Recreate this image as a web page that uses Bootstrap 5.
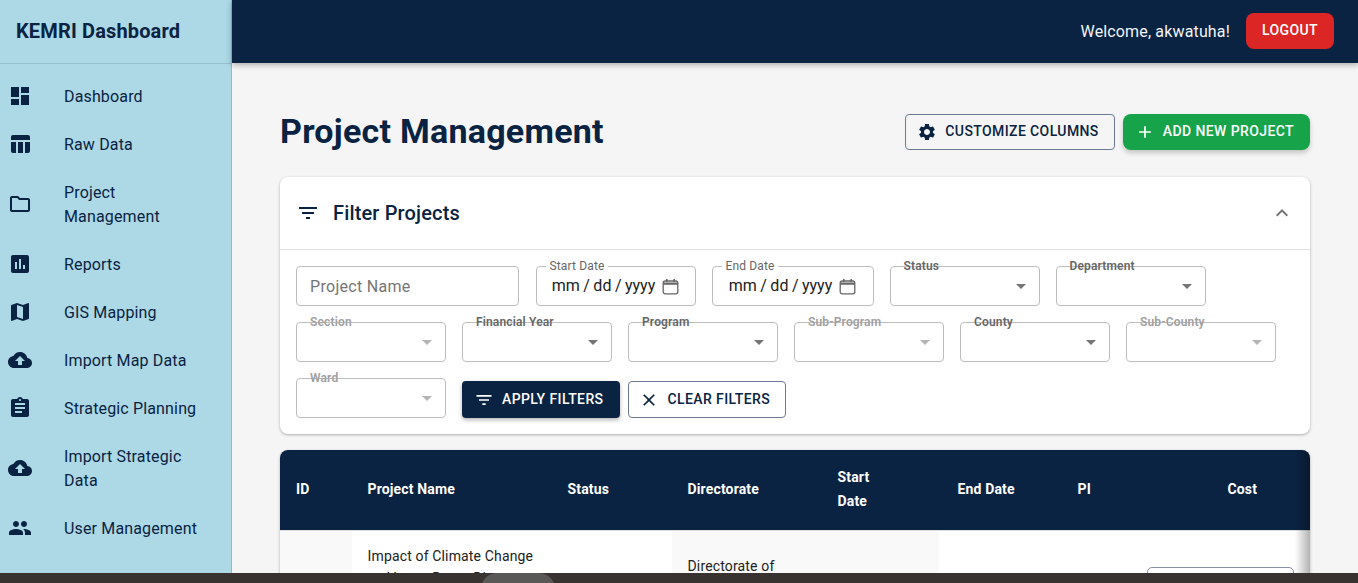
<!DOCTYPE html>
<html lang="en">
<head>
  <meta charset="UTF-8">
  <meta name="viewport" content="width=device-width, initial-scale=1.0">
  <title>KEMRI Dashboard</title>
  <link href="https://cdn.jsdelivr.net/npm/bootstrap@5.3.3/dist/css/bootstrap.min.css" rel="stylesheet">
  <script src="https://cdn.jsdelivr.net/npm/bootstrap@5.3.3/dist/js/bootstrap.bundle.min.js"></script>
  <style>
    html, body { height: 100%; overflow: hidden; }
    body { font-family: Roboto, "Liberation Sans", sans-serif; letter-spacing: .15px; background: #f5f5f5; color: #0a2342; }
    svg.ico { width: 24px; height: 24px; fill: currentColor; flex-shrink: 0; }
    svg.ico-btn { width: 20px; height: 20px; fill: currentColor; margin: 2px 8px 0 -4px; flex-shrink: 0; }

    .side-bar { width: 232px; flex-shrink: 0; background: #add8e6; border-right: 1px solid #8fbccb; height: 100vh; }
    .side-title { height: 64px; padding-left: 16px; font-size: 20px; font-weight: 700; line-height: 63px; border-bottom: 1px solid #93bfce; }
    .side-link { display: flex; align-items: center; min-height: 48px; padding: 11px 24px 11px 8px; font-size: 16px; line-height: 24px; color: #0a2342; text-decoration: none; }
    .side-link span { margin-left: 32px; padding-top: 2px; }

    .top-bar { height: 63px; background: #0a2342; padding: 0 24px 1px 0; box-shadow: 0 2px 6px rgba(0,0,0,.3); color: #f2f4f7; position: relative; z-index: 2; }
    .top-bar .hello { padding-top: 2px; }
    .mui-btn { height: 36px; padding: 0 16px 2px; font-size: 14px; font-weight: 500; letter-spacing: .4px; line-height: 1; border-radius: 4px; white-space: nowrap; display: inline-flex; align-items: center; }
    .btn-logout { background: #dc2626; color: #fff; border: 0; border-radius: 8px; }
    .btn-logout:hover { background: #dc2626; color: #fff; }
    .btn-add { background: #16a34a; color: #fff; border: 0; border-radius: 8px; box-shadow: 0 3px 5px rgba(0,0,0,.2); }
    .btn-add:hover { background: #16a34a; color: #fff; }
    .btn-line { background: transparent; color: #0a2342; border: 1px solid #6b7a90; padding: 0 15px 2px; }
    .btn-navy { background: #0a2342; color: #fff; border: 0; height: 37px; padding-right: 17px; box-shadow: 0 2px 4px rgba(0,0,0,.3); }
    .btn-navy:hover { background: #0a2342; color: #fff; }
    .btn-tall { height: 37px; padding-left: 14px; }

    .main-pane { padding: 48px; min-width: 0; }
    .page-title { font-size: 34px; font-weight: 700; letter-spacing: .25px; line-height: 40px; padding-bottom: 2px; margin: 0; color: #0a2342; }

    .filter-card { background: #fff; border-radius: 8px; box-shadow: 0 1px 3px rgba(0,0,0,.3); margin-top: 24px; }
    .filter-head { height: 73px; padding: 0 16px; border-bottom: 1px solid #e0e0e0; }
    .filter-head h2 { font-size: 20px; font-weight: 500; margin: 0 0 0 13px; color: #0a2342; }
    .chevron { color: #757575; }
    .filter-body { padding: 16px; }

    .fld { position: relative; width: 150px; }
    .fld-name { width: 223px; margin-right: .5px; }
    .fld-start { width: 160px; }
    .fld-end { width: 162px; }
    .fld label { position: absolute; left: 14px; top: -8px; font-size: 12px; line-height: 16px; font-weight: 600; color: #666; }
    .fld.off label { color: #a0a0a0; }
    .fld.dated label { left: 10px; padding: 0 3px 0 4px; font-weight: 400; background: #fff; }
    .fld .form-control, .fld .form-select { height: 40px; font-size: 16px; padding: 0 13px; border: 1px solid #bdbdbd; border-radius: 4px; color: #212121; box-shadow: none; }
    .fld .form-control::placeholder { color: #757575; letter-spacing: .3px; }
    .fld .date-box { padding: 0; gap: 7px; letter-spacing: 0; word-spacing: -.5px; }
    .date-box svg { width: 17px; height: 17px; }
    .fld .form-select { background-color: #fff; background-size: 24px 24px; background-position: right 6px center;
      background-image: url("data:image/svg+xml,%3csvg xmlns='http://www.w3.org/2000/svg' viewBox='0 0 24 24'%3e%3cpath fill='%23757575' d='M7 10l5 5 5-5z'/%3e%3c/svg%3e"); }
    .fld .form-select:disabled { background-color: #fff;
      background-image: url("data:image/svg+xml,%3csvg xmlns='http://www.w3.org/2000/svg' viewBox='0 0 24 24'%3e%3cpath fill='%23b5b5b5' d='M7 10l5 5 5-5z'/%3e%3c/svg%3e"); }

    .table-box { position: relative; margin-top: 16px; border-radius: 8px 8px 0 0; overflow: hidden; box-shadow: 0 1px 3px rgba(0,0,0,.3); background: #fff; }
    .table-box::after { content: ""; position: absolute; top: 0; right: 0; bottom: 0; width: 15px; background: linear-gradient(to right, rgba(0,0,0,0), rgba(0,0,0,.3)); }
    .proj-table { table-layout: fixed; width: 1082px; margin: 0; }
    .proj-table th { background: #0a2342; color: #fff; height: 80px; padding: 0 16px 2px 15.5px; font-size: 14px; font-weight: 700; line-height: 24px; vertical-align: middle; border-bottom: 1px solid #e0e0e0; }
    .proj-table th:first-child { padding-left: 16px; }
    .proj-table td { font-size: 14px; line-height: 24px; padding: 13px 16px 14px 15.5px; vertical-align: top; color: #212121; background: #fff; border: 0; box-shadow: none; }
    .proj-table td.band { background: #f9f9f9; }
    .proj-table td.band-end { box-shadow: inset -3px 0 #fff; }
    .proj-table td.low { padding-top: 23px; }
    .proj-table td.tight { line-height: 22px; padding-top: 14px; }
    .act-box { width: 147px; height: 40px; margin: 23px 0 0 -80.5px; border: 1px solid #8a91a6; border-radius: 5px; }

    .os-strip { position: fixed; left: 0; right: 0; bottom: 0; height: 10px; background: #383331; z-index: 10; }
    .os-pill { position: absolute; left: 481px; top: 0; width: 74px; height: 16px; background: #5a5856; border-radius: 16px 16px 0 0; }
  </style>
</head>
<body>
  <div class="d-flex">
    <!-- Sidebar -->
    <aside class="side-bar">
      <div class="side-title">KEMRI Dashboard</div>
      <nav class="py-2">
        <a class="side-link" href="#"><svg class="ico" viewBox="0 0 24 24"><path d="M3 13h8V3H3v10zm0 8h8v-6H3v6zm10 0h8V11h-8v10zm0-18v6h8V3h-8z"/></svg><span>Dashboard</span></a>
        <a class="side-link" href="#"><svg class="ico" viewBox="0 0 24 24"><path d="M10 10.02h5V21h-5zM17 21h3c1.1 0 2-.9 2-2v-9h-5v11zm3-18H5c-1.1 0-2 .9-2 2v3h19V5c0-1.1-.9-2-2-2zM3 19c0 1.1.9 2 2 2h3V10H3v9z"/></svg><span>Raw Data</span></a>
        <a class="side-link" href="#"><svg class="ico" viewBox="0 0 24 24"><path d="M9.17 6l2 2H20v10H4V6h5.17M10 4H4c-1.1 0-1.99.9-1.99 2L2 18c0 1.1.9 2 2 2h16c1.1 0 2-.9 2-2V8c0-1.1-.9-2-2-2h-8l-2-2z"/></svg><span>Project Management</span></a>
        <a class="side-link" href="#"><svg class="ico" viewBox="0 0 24 24"><path d="M19 3H5c-1.1 0-2 .9-2 2v14c0 1.1.9 2 2 2h14c1.1 0 2-.9 2-2V5c0-1.1-.9-2-2-2zM9 17H7v-7h2v7zm4 0h-2V7h2v10zm4 0h-2v-4h2v4z"/></svg><span>Reports</span></a>
        <a class="side-link" href="#"><svg class="ico" viewBox="0 0 24 24"><path d="M20.5 3l-.16.03L15 5.1 9 3 3.36 4.9c-.21.07-.36.25-.36.48V20.5c0 .28.22.5.5.5l.16-.03L9 18.9l6 2.1 5.64-1.9c.21-.07.36-.25.36-.48V3.5c0-.28-.22-.5-.5-.5zM15 19l-6-2.11V5l6 2.11V19z"/></svg><span>GIS Mapping</span></a>
        <a class="side-link" href="#"><svg class="ico" viewBox="0 0 24 24"><path d="M19.35 10.04C18.67 6.59 15.64 4 12 4 9.11 4 6.6 5.64 5.35 8.04 2.34 8.36 0 10.91 0 14c0 3.31 2.69 6 6 6h13c2.76 0 5-2.24 5-5 0-2.64-2.05-4.78-4.65-4.96zM14 13v4h-4v-4H7l5-5 5 5h-3z"/></svg><span>Import Map Data</span></a>
        <a class="side-link" href="#"><svg class="ico" viewBox="0 0 24 24"><path d="M19 3h-4.18C14.4 1.84 13.3 1 12 1c-1.3 0-2.4.84-2.82 2H5c-1.1 0-2 .9-2 2v14c0 1.1.9 2 2 2h14c1.1 0 2-.9 2-2V5c0-1.1-.9-2-2-2zm-7 0c.55 0 1 .45 1 1s-.45 1-1 1-1-.45-1-1 .45-1 1-1zm2 14H7v-2h7v2zm3-4H7v-2h10v2zm0-4H7V7h10v2z"/></svg><span>Strategic Planning</span></a>
        <a class="side-link" href="#"><svg class="ico" viewBox="0 0 24 24"><path d="M19.35 10.04C18.67 6.59 15.64 4 12 4 9.11 4 6.6 5.64 5.35 8.04 2.34 8.36 0 10.91 0 14c0 3.31 2.69 6 6 6h13c2.76 0 5-2.24 5-5 0-2.64-2.05-4.78-4.65-4.96zM14 13v4h-4v-4H7l5-5 5 5h-3z"/></svg><span>Import Strategic Data</span></a>
        <a class="side-link" href="#"><svg class="ico" viewBox="0 0 24 24"><path d="M16 11c1.66 0 2.99-1.34 2.99-3S17.66 5 16 5c-1.66 0-3 1.34-3 3s1.34 3 3 3zm-8 0c1.66 0 2.99-1.34 2.99-3S9.66 5 8 5C6.34 5 5 6.34 5 8s1.34 3 3 3zm0 2c-2.33 0-7 1.17-7 3.5V19h14v-2.5c0-2.33-4.67-3.5-7-3.5zm8 0c-.29 0-.62.02-.97.05 1.16.84 1.97 1.97 1.97 3.45V19h6v-2.5c0-2.33-4.67-3.5-7-3.5z"/></svg><span>User Management</span></a>
      </nav>
    </aside>

    <div class="flex-grow-1" style="min-width:0">
      <!-- Top bar -->
      <header class="top-bar d-flex align-items-center justify-content-end gap-3">
        <span class="hello">Welcome, akwatuha!</span>
        <button class="btn mui-btn btn-logout">LOGOUT</button>
      </header>

      <main class="main-pane">
        <div class="d-flex align-items-center justify-content-between">
          <h1 class="page-title">Project Management</h1>
          <div class="d-flex gap-2">
            <button class="btn mui-btn btn-line"><svg class="ico-btn" viewBox="0 0 24 24"><path d="M19.14 12.94c.04-.3.06-.61.06-.94 0-.32-.02-.64-.07-.94l2.03-1.58c.18-.14.23-.41.12-.61l-1.92-3.32c-.12-.22-.37-.29-.59-.22l-2.39.96c-.5-.38-1.03-.7-1.62-.94l-.36-2.54c-.04-.24-.24-.41-.48-.41h-3.84c-.24 0-.43.17-.47.41l-.36 2.54c-.59.24-1.13.57-1.62.94l-2.39-.96c-.22-.08-.47 0-.59.22L2.74 8.87c-.12.21-.08.47.12.61l2.03 1.58c-.05.3-.09.63-.09.94s.02.64.07.94l-2.03 1.58c-.18.14-.23.41-.12.61l1.92 3.32c.12.22.37.29.59.22l2.39-.96c.5.38 1.03.7 1.62.94l.36 2.54c.05.24.24.41.48.41h3.84c.24 0 .44-.17.47-.41l.36-2.54c.59-.24 1.13-.56 1.62-.94l2.39.96c.22.08.47 0 .59-.22l1.92-3.32c.12-.22.07-.47-.12-.61l-2.01-1.58zM12 15.6c-1.98 0-3.6-1.62-3.6-3.6s1.62-3.6 3.6-3.6 3.6 1.62 3.6 3.6-1.62 3.6-3.6 3.6z"/></svg>CUSTOMIZE COLUMNS</button>
            <button class="btn mui-btn btn-add"><svg class="ico-btn" viewBox="0 0 24 24"><path d="M19 13h-6v6h-2v-6H5v-2h6V5h2v6h6v2z"/></svg>ADD NEW PROJECT</button>
          </div>
        </div>

        <!-- Filters -->
        <section class="filter-card">
          <div class="filter-head d-flex align-items-center">
            <svg class="ico" viewBox="0 0 24 24"><path d="M10 18h4v-2h-4v2zM3 6v2h18V6H3zm3 7h12v-2H6v2z"/></svg>
            <h2>Filter Projects</h2>
            <svg class="ico chevron ms-auto" viewBox="0 0 24 24"><path d="M12 8l-6 6 1.41 1.41L12 10.83l4.59 4.58L18 14z"/></svg>
          </div>
          <div class="filter-body d-flex flex-wrap align-items-end gap-3">
            <div class="fld fld-name"><input class="form-control" type="text" placeholder="Project Name"></div>
            <div class="fld fld-start dated"><label>Start Date</label>
              <div class="form-control date-box d-flex align-items-center justify-content-center"><span>mm / dd / yyyy</span>
                <svg viewBox="0 0 17 17" fill="none"><rect x="1.2" y="3" width="14.6" height="12.8" rx="2" stroke="#666" stroke-width="1.3"/><path d="M1.2 4.5h14.6v2.2H1.2zM4 1h1.6v3H4zM11.4 1H13v3h-1.6z" fill="#666"/></svg></div></div>
            <div class="fld fld-end dated"><label>End Date</label>
              <div class="form-control date-box d-flex align-items-center justify-content-center"><span>mm / dd / yyyy</span>
                <svg viewBox="0 0 17 17" fill="none"><rect x="1.2" y="3" width="14.6" height="12.8" rx="2" stroke="#666" stroke-width="1.3"/><path d="M1.2 4.5h14.6v2.2H1.2zM4 1h1.6v3H4zM11.4 1H13v3h-1.6z" fill="#666"/></svg></div></div>
            <div class="fld"><label>Status</label><select class="form-select"><option></option></select></div>
            <div class="fld"><label>Department</label><select class="form-select"><option></option></select></div>
            <div class="fld off"><label>Section</label><select class="form-select" disabled><option></option></select></div>
            <div class="fld"><label>Financial Year</label><select class="form-select"><option></option></select></div>
            <div class="fld"><label>Program</label><select class="form-select"><option></option></select></div>
            <div class="fld off"><label>Sub-Program</label><select class="form-select" disabled><option></option></select></div>
            <div class="fld"><label>County</label><select class="form-select"><option></option></select></div>
            <div class="fld off"><label>Sub-County</label><select class="form-select" disabled><option></option></select></div>
            <div class="fld off"><label>Ward</label><select class="form-select" disabled><option></option></select></div>
            <div class="d-flex gap-2">
              <button class="btn mui-btn btn-navy"><svg class="ico-btn" viewBox="0 0 24 24"><path d="M10 18h4v-2h-4v2zM3 6v2h18V6H3zm3 7h12v-2H6v2z"/></svg>APPLY FILTERS</button>
              <button class="btn mui-btn btn-line btn-tall"><svg class="ico-btn" viewBox="0 0 24 24"><path d="M19 6.41 17.59 5 12 10.59 6.41 5 5 6.41 10.59 12 5 17.59 6.41 19 12 13.41 17.59 19 19 17.59 13.41 12z"/></svg>CLEAR FILTERS</button>
            </div>
          </div>
        </section>

        <!-- Projects table -->
        <div class="table-box">
          <table class="table proj-table">
            <colgroup>
              <col style="width:72px"><col style="width:200px"><col style="width:120px"><col style="width:150px"><col style="width:120px"><col style="width:120px"><col style="width:150px"><col style="width:150px">
            </colgroup>
            <thead>
              <tr><th>ID</th><th>Project Name</th><th>Status</th><th>Directorate</th><th>Start<br>Date</th><th>End Date</th><th>PI</th><th>Cost</th></tr>
            </thead>
            <tbody>
              <tr>
                <td class="band"></td>
                <td class="tight">Impact of Climate Change on Vector Borne Diseases</td>
                <td></td>
                <td class="band low">Directorate of</td>
                <td class="band band-end"></td>
                <td></td>
                <td></td>
                <td><div class="act-box"></div></td>
              </tr>
            </tbody>
          </table>
        </div>
      </main>
    </div>
  </div>

  <!-- Window strip along the bottom edge -->
  <div class="os-strip"><div class="os-pill"></div></div>
</body>
</html>
